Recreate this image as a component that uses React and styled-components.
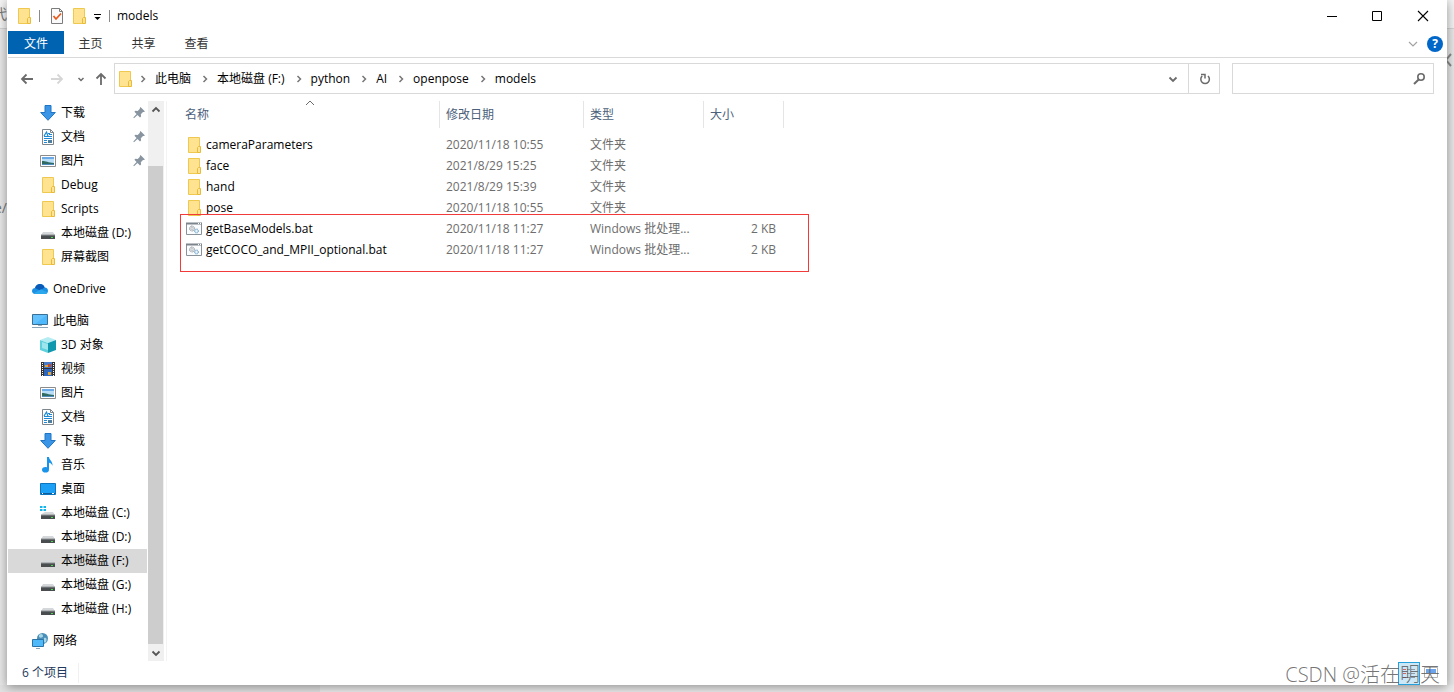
import React from 'react';
import styled, { createGlobalStyle, css } from 'styled-components';

const Colors = {
  accent: '#0063b1',
  text: '#000',
  muted: '#6d6d6d',
  heading: '#4c607a',
  status: '#1e395b',
  line: '#d9d9d9',
  faint: '#e5e5e5',
  icon: '#6b6b6b',
};

/* ---------- data ---------- */

const quickAccess = [
  { icon: 'download', label: '下载', pinned: true },
  { icon: 'document', label: '文档', pinned: true },
  { icon: 'picture', label: '图片', pinned: true },
  { icon: 'folder', label: 'Debug' },
  { icon: 'folder', label: 'Scripts' },
  { icon: 'drive', label: '本地磁盘 (D:)' },
  { icon: 'folder', label: '屏幕截图' },
];

const thisPc = [
  { icon: 'cube', label: '3D 对象' },
  { icon: 'video', label: '视频' },
  { icon: 'picture', label: '图片' },
  { icon: 'document', label: '文档' },
  { icon: 'download', label: '下载' },
  { icon: 'music', label: '音乐' },
  { icon: 'desktop', label: '桌面' },
  { icon: 'systemDrive', label: '本地磁盘 (C:)' },
  { icon: 'drive', label: '本地磁盘 (D:)' },
  { icon: 'drive', label: '本地磁盘 (F:)', selected: true },
  { icon: 'drive', label: '本地磁盘 (G:)' },
  { icon: 'drive', label: '本地磁盘 (H:)' },
];

const crumbs = ['此电脑', '本地磁盘 (F:)', 'python', 'AI', 'openpose', 'models'];

const files = [
  { name: 'cameraParameters', date: '2020/11/18 10:55', type: '文件夹', size: '', icon: 'folder' },
  { name: 'face', date: '2021/8/29 15:25', type: '文件夹', size: '', icon: 'folder' },
  { name: 'hand', date: '2021/8/29 15:39', type: '文件夹', size: '', icon: 'folder' },
  { name: 'pose', date: '2020/11/18 10:55', type: '文件夹', size: '', icon: 'folder' },
  { name: 'getBaseModels.bat', date: '2020/11/18 11:27', type: 'Windows 批处理...', size: '2 KB', icon: 'batch' },
  { name: 'getCOCO_and_MPII_optional.bat', date: '2020/11/18 11:27', type: 'Windows 批处理...', size: '2 KB', icon: 'batch' },
];

/* ---------- icons ---------- */

const shapes = {
  folder: (
    <>
      <path d='M2.5 .5h11v15h-11z' fill='#ffe391' stroke='#eec84f' />
      <path d='M12.5 9.5h2v6h-3v-5z' fill='#ffe391' stroke='#e8bc3a' />
    </>
  ),
  download: (
    <path d='M5 .5h6v7h4.3L8 15.3.7 7.500H5z' fill='#3b95e6' stroke='#1f74c4' />
  ),
  document: (
    <>
      <path d='M2.500 .5h8l3 3v12h-11z' fill='#fff' stroke='#7d868c' />
      <path d='M10.500 .5v3h3' fill='none' stroke='#7d868c' />
      <path d='M8 4.500h2M4 7.500h8M9 5.500h3M4 9.500h8M4 11.500h3M4 13.500h3' stroke='#1c8ad6' />
      <path d='M4 7l2.500-4L8 7' fill='none' stroke='#1c8ad6' strokeWidth='1.200' />
      <path d='M8 11h4v3H8z' fill='#4f7f9c' />
    </>
  ),
  picture: (
    <>
      <path d='M.5 2.500h15v11H.5z' fill='#fff' stroke='#8b8b8b' />
      <path d='M2 4h12v8H2z' fill='#b9dcf7' />
      <path d='M2 4h12v2H2z' fill='#6aaae6' />
      <path d='M2 8c4 0 6 1.500 12 2v1H2z' fill='#2f6b62' />
      <path d='M2 11h12v1H2z' fill='#4e8cc0' />
    </>
  ),
  drive: (
    <>
      <path d='M3 7h10l2 3H1z' fill='#d5d8da' />
      <path d='M1 10h14v4H1z' fill='#4a4d50' />
      <path d='M1 10h14' stroke='#8f9395' />
      <path d='M11 12h2v1h-2z' fill='#3fe04a' />
    </>
  ),
  systemDrive: (
    <>
      <path d='M0 1h2.500v2H0zM3.500 1H6v2H3.500zM0 4h2.500v2H0zM3.500 4H6v2H3.500z' fill='#12b5ea' />
      <path d='M5 7h8l2 3H1l2-2z' fill='#d5d8da' />
      <path d='M1 10h14v4H1z' fill='#4a4d50' />
      <path d='M1 10h14' stroke='#8f9395' />
      <path d='M11 12h2v1h-2z' fill='#3fe04a' />
    </>
  ),
  cloud: (
    <>
      <path
        d='M3.500 13C1 13 0 11.500 0 10c0-2 1.500-3 3-3 .8-2.500 2.700-4 5-4 2.400 0 4 1.500 4.600 3.500C15 6.500 16 8 16 9.800 16 11.700 14.700 13 13 13z'
        fill='#1a8fe3'
      />
      <path d='M3 7c.8-2.500 2.700-4 5-4 2.400 0 4 1.500 4.600 3.500L8 9.500z' fill='#0a5ab8' />
      <path d='M1.500 12.500L9 8.200l6.500 3.300c-.5 1-1.500 1.500-2.500 1.500H3.500c-.8 0-1.500-.2-2-.5z' fill='#2ba7ee' />
    </>
  ),
  computer: (
    <>
      <path d='M.5 1.500h15v10H.5z' fill='#4db8fb' stroke='#3a6f96' />
      <path d='M1 2h14L3 11H1z' fill='#7accff' opacity='.5' />
      <path d='M6 12h4v1H6z' fill='#9bb0bf' />
      <path d='M0 14.500h16' stroke='#8aa5b8' />
    </>
  ),
  cube: (
    <>
      <path d='M8 0l8 3-8 3-8-3z' fill='#b4ecf2' />
      <path d='M0 3l8 3v10l-8-3z' fill='#5fd0dc' />
      <path d='M16 3L8 6v10l8-3z' fill='#0f98ae' />
      <path d='M2 5l6 2v6l-6-2z' fill='#9de6ee' />
    </>
  ),
  video: (
    <>
      <path d='M1 1h14v14H1z' fill='#333' />
      <path d='M4 1h8v6H4z' fill='#4a7bc8' />
      <path d='M4 8h8v7H4z' fill='#2e66bc' />
      <path d='M5 4h3v2H5zM8 11h3v3H8z' fill='#e6a531' />
      <path d='M8 3h3v3H8z' fill='#b94b34' />
      <path d='M2.500 2v13M13.500 2v13' stroke='#fff' strokeDasharray='1 1' />
    </>
  ),
  music: (
    <>
      <path d='M7 0h2c0 3 4 4 3.500 9-.5-2-2-3-3.500-3.200V12H7z' fill='#1a93ea' />
      <ellipse cx='5.500' cy='12.800' rx='3.500' ry='2.800' fill='#1a93ea' />
    </>
  ),
  desktop: (
    <>
      <path d='M.5 2.500h15v11H.5z' fill='#1ca0f6' stroke='#0d75bd' />
      <path d='M1 12.500h14' stroke='#0b5c9a' />
      <path d='M2 12.500h1M12 12.500h2' stroke='#fff' />
    </>
  ),
  network: (
    <>
      <circle cx='10.500' cy='5.500' r='5.500' fill='#4a8fb8' />
      <path d='M7 2c2-2 4-1 4 1S8 5 7 4zM12 5c3-1 3 2 2 4s-3 0-2-4z' fill='#a8d6e6' />
      <path d='M.5 6.500h11v7H.5z' fill='#50b9fa' stroke='#2c74a6' />
      <path d='M4 15.500h4' stroke='#8aa5b8' />
    </>
  ),
  batch: (
    <>
      <path d='M.5 2.500h15v11H.5z' fill='#fbfcfd' stroke='#8a9299' />
      <path d='M0 2.500h16' stroke='#7c858c' strokeWidth='2' />
      <path d='M12 2.500h1M14 2.500h1' stroke='#fff' />
      <circle cx='6' cy='7.500' r='2.500' fill='#e3e6e8' stroke='#8f979c' strokeDasharray='1 .5' />
      <circle cx='6' cy='7.500' r='1' fill='#fff' stroke='#8f979c' strokeWidth='.5' />
      <circle cx='10.500' cy='10' r='2' fill='#c5def0' stroke='#6fa3c7' strokeDasharray='1 .5' />
      <circle cx='10.500' cy='10' r='.7' fill='#fff' />
    </>
  ),
  properties: (
    <>
      <path d='M2.500 .5h8l3 3v12h-11z' fill='#fafafa' stroke='#7c7c7c' />
      <path d='M10.500 .5v3h3' fill='none' stroke='#7c7c7c' />
      <path d='M4.500 8l2.500 3 5-5.500' fill='none' stroke='#e8571c' strokeWidth='1.700' />
    </>
  ),
  back: <path d='M14 8H3M7.500 3.500L3 8l4.500 4.500' fill='none' stroke='#6b6b6b' strokeWidth='1.800' />,
  forward: <path d='M2 8h11M8.500 3.500L13 8l-4.500 4.500' fill='none' stroke='#d6d6d6' strokeWidth='1.800' />,
  up: <path d='M8 14V3M3.500 7.500L8 3l4.500 4.500' fill='none' stroke='#6b6b6b' strokeWidth='1.800' />,
  chevronRight: <path d='M6.500 5l3 3-3 3' fill='none' stroke='#777' strokeWidth='1.500' />,
  chevronDown: <path d='M4.500 6.500L8 10l3.500-3.500' fill='none' stroke='currentColor' strokeWidth='1.800' />,
  smallDown: <path d='M5.500 7L8 9.500 10.500 7' fill='none' stroke='#6b6b6b' strokeWidth='1.500' />,
  chevronUp: <path d='M4.500 9.500L8 6l3.500 3.500' fill='none' stroke='currentColor' strokeWidth='1.800' />,
  chevronLeft: <path d='M4 2L-1 8l5 6' fill='none' stroke='#8a8a8a' strokeWidth='2' />,
  expand: <path d='M4 6l4 4 4-4' fill='none' stroke='#a3a3a3' strokeWidth='1.200' />,
  customize: (
    <>
      <path d='M5 6.500h7' stroke='#000' />
      <path d='M5.500 9h6l-3 3z' />
    </>
  ),
  refresh: (
    <path d='M6.200 5A4.300 4.300 0 1 0 12 5M5 3.500h4v4' fill='none' stroke='#6b6b6b' strokeWidth='1.500' />
  ),
  search: (
    <>
      <circle cx='10' cy='6' r='3.200' fill='none' stroke='#6b6b6b' strokeWidth='1.600' />
      <path d='M7.700 8.500L3 13' stroke='#6b6b6b' strokeWidth='2' />
    </>
  ),
  pin: (
    <path
      d='M9.500 2l4.500 4.500-1.200.6-.8-.1-2.200 2.200.3 2.300-1.100.9L6.500 10 3 13.200l-.7-.7L5.600 9 3.400 6.800l1-1 2.300.2L8.900 3.800l-.1-.8z'
      fill='#8895a0'
    />
  ),
  minimize: <path d='M3 8.500h10' stroke='#000' />,
  maximize: <path d='M2.500 3.500h9v9h-9z' fill='none' stroke='#000' />,
  close: <path d='M2 3l10 10M12 3L2 13' stroke='#000' strokeWidth='1.100' />,
  sortUp: <path d='M4 10l4-4 4 4' fill='none' stroke='#6b6b6b' />,
  details: (
    <>
      <path d='M2 4.500h3M2 8.500h3M2 12.500h3' stroke='#d0685e' />
      <path d='M6 4.500h3M10 4.500h4M6 8.500h3M10 8.500h4M6 12.500h3M10 12.500h4' stroke='#8f9aa3' />
    </>
  ),
  tiles: (
    <>
      <path d='M1.500 2.500h13v10h-13z' fill='#fff' stroke='#b5b5b5' />
      <path d='M3 4h10v4H3z' fill='#6ea5ea' />
    </>
  ),
};

const Svg = styled.svg`
  display: block;
  flex: none;
`;

const Icon = ({ name }) => (
  <Svg width='16' height='16' viewBox='0 0 16 16' aria-hidden='true'>
    {shapes[name]}
  </Svg>
);

/* ---------- components ---------- */

const TitleBar = () => (
  <TitleBarWrapper>
    <Icon name='folder' />
    <TitleDivider />
    <IconButton aria-label='属性'>
      <Icon name='properties' />
    </IconButton>
    <IconButton aria-label='新建文件夹' $gap='6px'>
      <Icon name='folder' />
    </IconButton>
    <IconButton aria-label='自定义快速访问工具栏' $gap='2px'>
      <Icon name='customize' />
    </IconButton>
    <TitleDivider $tight />
    <Title>models</Title>
    <CaptionButton aria-label='最小化'>
      <Icon name='minimize' />
    </CaptionButton>
    <CaptionButton aria-label='最大化'>
      <Icon name='maximize' />
    </CaptionButton>
    <CaptionButton aria-label='关闭'>
      <Icon name='close' />
    </CaptionButton>
  </TitleBarWrapper>
);

const Ribbon = () => (
  <RibbonWrapper>
    <FileTab>文件</FileTab>
    <Tab>主页</Tab>
    <Tab>共享</Tab>
    <Tab>查看</Tab>
    <RibbonTools>
      <IconButton aria-label='展开功能区'>
        <Icon name='expand' />
      </IconButton>
      <HelpButton aria-label='帮助'>?</HelpButton>
    </RibbonTools>
  </RibbonWrapper>
);

const AddressBar = () => (
  <AddressRow>
    <NavButtons>
      <IconButton aria-label='后退'>
        <Icon name='back' />
      </IconButton>
      <IconButton aria-label='前进' $gap='14px'>
        <Icon name='forward' />
      </IconButton>
      <IconButton aria-label='最近浏览的位置' $gap='8px'>
        <Icon name='smallDown' />
      </IconButton>
      <IconButton aria-label='上移' $gap='4px'>
        <Icon name='up' />
      </IconButton>
    </NavButtons>
    <PathBox>
      <Icon name='folder' />
      <Crumbs>
        {crumbs.map((crumb) => (
          <React.Fragment key={crumb}>
            <CrumbArrow>
              <Icon name='chevronRight' />
            </CrumbArrow>
            <Crumb>{crumb}</Crumb>
          </React.Fragment>
        ))}
      </Crumbs>
      <HistoryButton aria-label='以前的位置'>
        <Icon name='chevronDown' />
      </HistoryButton>
      <RefreshButton aria-label='刷新'>
        <Icon name='refresh' />
      </RefreshButton>
    </PathBox>
    <SearchBox>
      <SearchInput type='text' aria-label='搜索' />
      <Icon name='search' />
    </SearchBox>
  </AddressRow>
);

const NavItem = ({ icon, label, pinned, selected, root }) => (
  <NavLink href='#' $selected={selected} $root={root}>
    <Icon name={icon} />
    <NavLabel>{label}</NavLabel>
    {pinned && <Icon name='pin' />}
  </NavLink>
);

const Sidebar = () => (
  <SidebarWrapper>
    <NavGroup>
      {quickAccess.map((item) => (
        <NavItem key={item.label} {...item} />
      ))}
    </NavGroup>
    <NavGroup>
      <NavItem icon='cloud' label='OneDrive' root />
    </NavGroup>
    <NavGroup>
      <NavItem icon='computer' label='此电脑' root />
      {thisPc.map((item) => (
        <NavItem key={item.label} {...item} />
      ))}
    </NavGroup>
    <NavGroup>
      <NavItem icon='network' label='网络' root />
    </NavGroup>
  </SidebarWrapper>
);

const FileList = () => (
  <FilePane>
    <FileTable>
      <colgroup>
        <NameCol />
        <DateCol />
        <TypeCol />
        <SizeCol />
      </colgroup>
      <thead>
        <tr>
          <HeadCell>
            名称
            <SortMark>
              <Icon name='sortUp' />
            </SortMark>
          </HeadCell>
          <HeadCell>修改日期</HeadCell>
          <HeadCell>类型</HeadCell>
          <HeadCell>大小</HeadCell>
        </tr>
      </thead>
      <tbody>
        <SpacerRow>
          <td colSpan='4' />
        </SpacerRow>
        {files.map((file) => (
          <tr key={file.name}>
            <NameCell>
              <FileName>
                <Icon name={file.icon} />
                {file.name}
              </FileName>
            </NameCell>
            <Cell>{file.date}</Cell>
            <Cell>{file.type}</Cell>
            <SizeCell>{file.size}</SizeCell>
          </tr>
        ))}
      </tbody>
    </FileTable>
    <Highlight />
  </FilePane>
);

const App = () => (
  <>
    <GlobalStyle />
    <Backdrop>
      <BehindLeft>
        <BehindText $top='4px'>代</BehindText>
        <BehindText $top='198px'>e/</BehindText>
      </BehindLeft>
      <Window>
        <TitleBar />
        <Ribbon />
        <AddressBar />
        <Body>
          <Sidebar />
          <ScrollBar>
            <ScrollButton aria-label='向上滚动'>
              <Icon name='chevronUp' />
            </ScrollButton>
            <ScrollThumb />
            <ScrollButton aria-label='向下滚动'>
              <Icon name='chevronDown' />
            </ScrollButton>
          </ScrollBar>
          <FileList />
        </Body>
        <StatusBar>
          <StatusText>6 个项目</StatusText>
          <ViewButton aria-label='详细信息' $active>
            <Icon name='details' />
          </ViewButton>
          <ViewButton aria-label='大图标'>
            <Icon name='tiles' />
          </ViewButton>
        </StatusBar>
        <Watermark>CSDN @活在明天</Watermark>
      </Window>
      <BehindRight>
        <Icon name='chevronLeft' />
      </BehindRight>
    </Backdrop>
  </>
);

export default App;

/* ---------- styles ---------- */

const GlobalStyle = createGlobalStyle`
  *,
  *::before,
  *::after {
    box-sizing: border-box;
  }

  body {
    margin: 0;
    font-family: 'Open Sans', 'Noto Sans CJK SC', sans-serif;
    font-size: 12px;
    line-height: 20px;
    color: ${Colors.text};
    background: #e6e6e6;
  }

  button,
  input {
    margin: 0;
    padding: 0;
    border: 0;
    font: inherit;
    color: inherit;
    background: none;
  }
`;

const Backdrop = styled.div`
  display: grid;
  grid-template-columns: 7px 1fr 7px;
  min-height: 100vh;
  padding-bottom: 7px;
  overflow: hidden;
  background: linear-gradient(90deg, #e2e2e2 22%, #ececec 22%);
`;

const BehindLeft = styled.div`
  position: relative;
  overflow: hidden;
  background: linear-gradient(#f4f4f4 28px, #d4d4d4 28px, #d4d4d4 29px, #e8e8e8 29px);
`;

const BehindRight = styled.div`
  padding-top: 52px;
  overflow: hidden;
  background: linear-gradient(#f4f4f4 28px, #d4d4d4 28px, #d4d4d4 29px, #e8e8e8 29px);
`;

const BehindText = styled.span`
  position: absolute;
  top: ${(props) => props.$top};
  right: 0;
  font-size: 14px;
  color: #777;
`;

const Window = styled.main`
  position: relative;
  display: flex;
  flex-direction: column;
  padding-left: 1px;
  background: #fff;
  box-shadow: 0 2px 10px rgba(0, 0, 0, 0.4);
`;

const IconButton = styled.button`
  display: flex;
  margin-left: ${(props) => props.$gap || 0};
`;

const TitleBarWrapper = styled.header`
  display: flex;
  align-items: center;
  height: 31px;
  padding-left: 8px;
`;

const TitleDivider = styled.span`
  width: 1px;
  height: 12px;
  margin: ${(props) => (props.$tight ? '0 7px 0 4px' : '0 9px 0 7px')};
  background: #8a8a8a;
`;

const Title = styled.h1`
  flex: 1;
  margin: 0;
  font-size: inherit;
  font-weight: 400;
`;

const CaptionButton = styled.button`
  display: flex;
  align-items: center;
  justify-content: center;
  width: 46px;
  height: 30px;
`;

const RibbonWrapper = styled.nav`
  display: flex;
  height: 27px;
  padding-bottom: 3px;
  border-bottom: 1px solid ${Colors.line};
`;

const Tab = styled.button`
  width: 53px;
  padding-top: 2px;
  color: #333;
`;

const FileTab = styled(Tab)`
  width: 56px;
  color: #fff;
  background: ${Colors.accent};
`;

const RibbonTools = styled.div`
  display: flex;
  flex: 1;
  align-items: center;
  justify-content: flex-end;
  gap: 6px;
  padding: 3px 4px 0 0;
`;

const HelpButton = styled.button`
  width: 16px;
  height: 16px;
  border-radius: 50%;
  font-weight: 700;
  line-height: 16px;
  color: #fff;
  background: #0067c8;
`;

const AddressRow = styled.div`
  display: flex;
  align-items: center;
  height: 43px;
  padding: 0 13px 2px 11px;
`;

const NavButtons = styled.div`
  display: flex;
  width: 95px;
`;

const PathBox = styled.div`
  display: flex;
  flex: 1;
  align-items: center;
  height: 31px;
  padding-left: 2px;
  border: 1px solid ${Colors.line};
`;

const Crumbs = styled.div`
  display: flex;
  align-items: center;
  margin-left: -4px;
`;

const CrumbArrow = styled.span`
  padding: 0 4px 0 6px;
`;

const Crumb = styled.button`
  white-space: nowrap;
`;

const HistoryButton = styled.button`
  display: flex;
  align-items: center;
  justify-content: center;
  width: 30px;
  height: 100%;
  margin-left: auto;
  color: ${Colors.icon};
`;

const RefreshButton = styled(HistoryButton)`
  width: 31px;
  margin-left: 0;
  border-left: 1px solid ${Colors.line};
`;

const SearchBox = styled.label`
  display: flex;
  align-items: center;
  width: 202px;
  height: 31px;
  margin-left: 12px;
  padding-right: 6px;
  border: 1px solid ${Colors.line};
`;

const SearchInput = styled.input`
  flex: 1;
  min-width: 0;
  height: 100%;
  padding-left: 8px;
  outline: none;
`;

const Body = styled.div`
  display: flex;
  flex: 1;
`;

const SidebarWrapper = styled.nav`
  width: 139px;
  padding-bottom: 8px;
`;

const NavGroup = styled.div`
  & + & {
    margin-top: 8px;
  }
`;

const NavLink = styled.a`
  display: flex;
  align-items: center;
  gap: 5px;
  height: 24px;
  padding-left: ${(props) => (props.$root ? '24px' : '32px')};
  color: inherit;
  text-decoration: none;
  ${(props) =>
    props.$selected &&
    css`
      background: #d9d9d9;
    `}
`;

const NavLabel = styled.span`
  flex: 1;
  white-space: nowrap;
`;

const ScrollBar = styled.div`
  display: flex;
  flex-direction: column;
  width: 16px;
  margin-left: 1px;
  background: #f0f0f0;
`;

const ScrollButton = styled.button`
  display: flex;
  align-items: center;
  justify-content: center;
  height: 17px;
  color: #555;
`;

const ScrollThumb = styled.div`
  flex: 1;
  margin: 48px 1px 0 0;
  background: #cdcdcd;
`;

const FilePane = styled.section`
  position: relative;
  flex: 1;
  margin-left: 2px;
  padding-left: 12px;
  border-left: 1px solid #f3f3f3;
`;

const FileTable = styled.table`
  width: 605px;
  table-layout: fixed;
  border-collapse: collapse;
`;

const NameCol = styled.col`
  width: 261px;
`;

const DateCol = styled.col`
  width: 144px;
`;

const TypeCol = styled.col`
  width: 120px;
`;

const SizeCol = styled.col`
  width: 80px;
`;

const HeadCell = styled.th`
  position: relative;
  height: 27px;
  padding: 0 6px;
  font-weight: 400;
  text-align: left;
  color: ${Colors.heading};
  box-shadow: inset -1px 0 ${Colors.faint};
`;

const SortMark = styled.span`
  position: absolute;
  top: -6px;
  left: calc(50% - 8px);
`;

const SpacerRow = styled.tr`
  height: 6px;

  & td {
    padding: 0;
  }
`;

const Cell = styled.td`
  height: 21px;
  padding: 0 6px;
  white-space: nowrap;
  color: ${Colors.muted};
`;

const NameCell = styled(Cell)`
  padding-left: 7px;
  color: ${Colors.text};
`;

const SizeCell = styled(Cell)`
  padding-right: 8px;
  text-align: right;
`;

const FileName = styled.span`
  display: flex;
  align-items: center;
  gap: 4px;
`;

// Red frame drawn over the batch files.
const Highlight = styled.div`
  position: absolute;
  top: 113px;
  left: 13px;
  width: 629px;
  height: 58px;
  border: 1px solid #f23a3a;
  pointer-events: none;
`;

const StatusBar = styled.footer`
  display: flex;
  align-items: center;
  height: 24px;
  padding: 0 5px 0 14px;
  color: ${Colors.status};
`;

const StatusText = styled.span`
  margin-right: auto;
  padding-right: 10px;
  border-right: 1px solid #f0f0f0;
`;

const ViewButton = styled.button`
  display: flex;
  align-items: center;
  justify-content: center;
  width: 22px;
  height: 23px;
  border: 1px solid ${(props) => (props.$active ? '#26a0da' : 'transparent')};
  background: ${(props) => (props.$active ? '#cce8f6' : 'none')};
`;

const Watermark = styled.span`
  position: absolute;
  right: 7px;
  bottom: -2px;
  font-size: 20px;
  font-weight: 300;
  line-height: 24px;
  color: rgba(80, 80, 80, 0.8);
  pointer-events: none;
`;
